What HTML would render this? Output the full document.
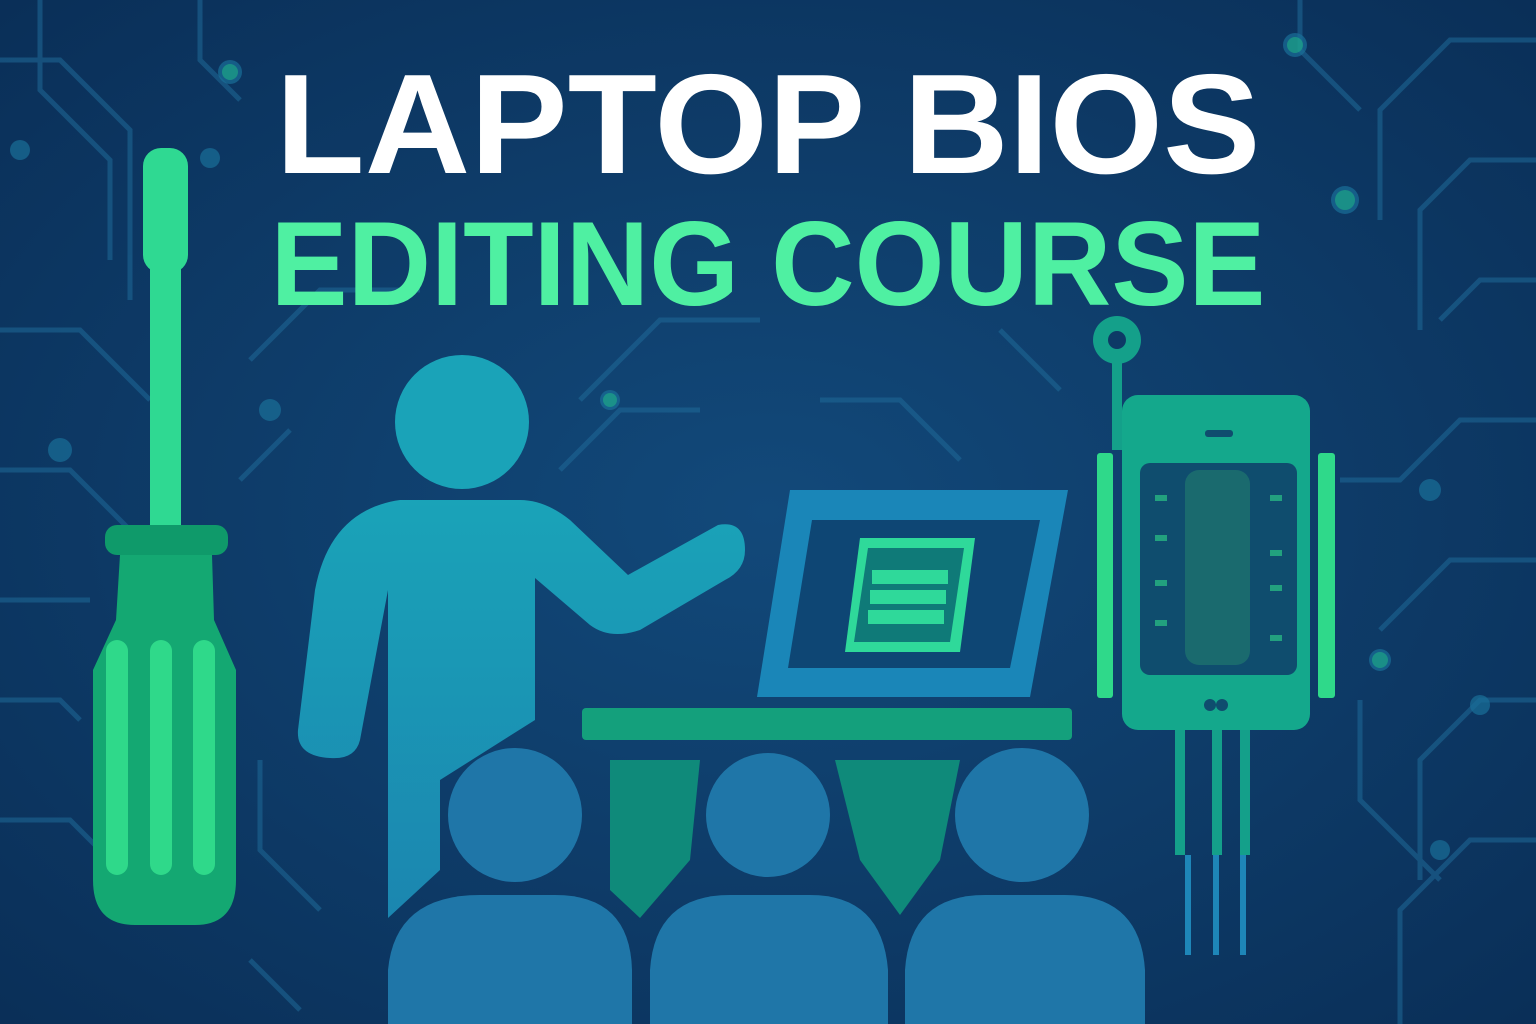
<!DOCTYPE html>
<html><head><meta charset="utf-8"><style>
html,body{margin:0;padding:0;width:1536px;height:1024px;overflow:hidden;background:#0d3a66}
svg{display:block}
</style></head><body>
<svg width="1536" height="1024" viewBox="0 0 1536 1024" xmlns="http://www.w3.org/2000/svg">
<defs>
<radialGradient id="bg" cx="50%" cy="50%" r="70%">
<stop offset="0" stop-color="#12497a"/><stop offset="1" stop-color="#0a2f58"/>
</radialGradient>
<linearGradient id="person" x1="0" y1="0" x2="0" y2="1">
<stop offset="0" stop-color="#1aa3b8"/><stop offset="1" stop-color="#1b86b0"/>
</linearGradient>
</defs>
<rect width="1536" height="1024" fill="url(#bg)"/>
<g stroke="#1f6a98" stroke-width="5" fill="none" opacity="0.55">
<polyline points="0,60 60,60 130,130 130,300"/>
<polyline points="40,0 40,90 110,160 110,260"/>
<polyline points="200,0 200,60 240,100"/>
<polyline points="0,330 80,330 150,400"/>
<polyline points="0,470 70,470 130,530"/>
<polyline points="0,600 90,600"/>
<polyline points="0,700 60,700 80,720"/>
<polyline points="0,820 70,820 100,850"/>
<polyline points="250,360 320,290 420,290"/>
<polyline points="240,480 290,430"/>
<polyline points="260,760 260,850 320,910"/>
<polyline points="250,960 300,1010"/>
<polyline points="1536,40 1450,40 1380,110 1380,220"/>
<polyline points="1300,0 1300,50 1360,110"/>
<polyline points="1536,160 1470,160 1420,210 1420,330"/>
<polyline points="1536,280 1480,280 1440,320"/>
<polyline points="1536,420 1460,420 1400,480 1340,480"/>
<polyline points="1536,560 1450,560 1380,630"/>
<polyline points="1536,700 1480,700 1420,760 1420,880"/>
<polyline points="1536,840 1470,840 1400,910 1400,1024"/>
<polyline points="1360,700 1360,800 1440,880"/>
<polyline points="580,400 660,320 760,320"/>
<polyline points="820,400 900,400 960,460"/>
<polyline points="1000,330 1060,390"/>
<polyline points="560,470 620,410 700,410"/>
</g>
<g fill="#1a6f98" opacity="0.7">
<circle cx="230" cy="72" r="12"/><circle cx="210" cy="158" r="10"/><circle cx="1295" cy="45" r="12"/>
<circle cx="1345" cy="200" r="14"/><circle cx="1380" cy="660" r="11"/><circle cx="1480" cy="705" r="10"/>
<circle cx="610" cy="400" r="10"/><circle cx="270" cy="410" r="11"/><circle cx="20" cy="150" r="10"/>
<circle cx="60" cy="450" r="12"/><circle cx="1430" cy="490" r="11"/><circle cx="1440" cy="850" r="10"/>
</g>
<g fill="#1fbf86" opacity="0.5">
<circle cx="230" cy="72" r="8"/><circle cx="1295" cy="45" r="8"/><circle cx="1345" cy="200" r="10"/><circle cx="1380" cy="660" r="8"/><circle cx="610" cy="400" r="7"/>
</g>
<text x="768" y="173" text-anchor="middle" font-family="Liberation Sans, sans-serif" font-weight="700" font-size="142" fill="#ffffff" textLength="985" lengthAdjust="spacingAndGlyphs">LAPTOP BIOS</text>
<text x="768" y="305" text-anchor="middle" font-family="Liberation Sans, sans-serif" font-weight="700" font-size="120" fill="#4ff0a2" textLength="995" lengthAdjust="spacingAndGlyphs">EDITING COURSE</text>
<!-- screwdriver -->
<rect x="143" y="148" width="45" height="125" rx="18" fill="#2fd992"/>
<rect x="150" y="265" width="31" height="265" fill="#2fd992"/>
<rect x="105" y="525" width="123" height="30" rx="12" fill="#0f9a6a"/>
<path d="M120,555 L212,555 L214,620 L236,670 L236,880 Q236,925 195,925 L135,925 Q93,925 93,880 L93,670 L116,620 Z" fill="#14a872"/>
<rect x="106" y="640" width="22" height="235" rx="11" fill="#2fd98a"/>
<rect x="150" y="640" width="22" height="235" rx="11" fill="#2fd98a"/>
<rect x="193" y="640" width="22" height="235" rx="11" fill="#2fd98a"/>
<!-- person -->
<circle cx="462" cy="422" r="67" fill="#1aa3b8"/>
<path d="M400,500 L520,500 Q545,500 570,520 L628,575 L718,525 Q745,520 745,550 Q745,570 725,580 L640,630 Q610,640 590,625 L535,578 L535,720 L440,780 L440,870 L388,918 L388,590 L360,740 Q355,760 330,758 Q296,756 298,730 L315,590 Q330,510 400,500 Z" fill="url(#person)"/>
<!-- laptop -->
<path d="M790,490 L1068,490 L1030,697 L757,697 Z" fill="#1a86b8"/>
<path d="M812,520 L1040,520 L1010,668 L788,668 Z" fill="#0e4674"/>
<path d="M860,538 L975,538 L960,652 L845,652 Z" fill="#2fd99a"/>
<path d="M868,548 L964,548 L950,642 L854,642 Z" fill="#0f7a78"/>
<rect x="872" y="570" width="76" height="14" fill="#2fd99a"/>
<rect x="870" y="590" width="76" height="14" fill="#2fd99a"/>
<rect x="868" y="610" width="76" height="14" fill="#2fd99a"/>
<rect x="582" y="708" width="490" height="32" rx="4" fill="#14a07c"/>
<path d="M610,760 L700,760 L690,860 L640,918 L610,890 Z" fill="#0f8a7a"/>
<path d="M835,760 L960,760 L940,860 L900,915 L860,860 Z" fill="#0f8a7a"/>
<!-- audience -->
<g fill="#1f76a8">
<circle cx="515" cy="815" r="67"/><circle cx="768" cy="815" r="62"/><circle cx="1022" cy="815" r="67"/>
<path d="M388,1024 L388,970 Q395,895 480,895 L555,895 Q630,895 632,970 L632,1024 Z"/>
<path d="M650,1024 L650,970 Q655,895 730,895 L810,895 Q882,895 888,970 L888,1024 Z"/>
<path d="M905,1024 L905,970 Q910,895 985,895 L1065,895 Q1140,895 1145,970 L1145,1024 Z"/>
</g>
<!-- device -->
<circle cx="1117" cy="340" r="24" fill="#14a08a"/><circle cx="1117" cy="340" r="9" fill="#0d3a66"/>
<rect x="1112" y="360" width="10" height="90" fill="#14a08a"/>
<rect x="1097" y="453" width="16" height="245" rx="3" fill="#2fd98a"/>
<rect x="1318" y="453" width="17" height="245" rx="3" fill="#2fd98a"/>
<rect x="1175" y="725" width="10" height="130" fill="#14a08a"/>
<rect x="1212" y="725" width="10" height="130" fill="#14a08a"/>
<rect x="1240" y="725" width="10" height="130" fill="#14a08a"/>
<rect x="1185" y="855" width="6" height="100" fill="#1e86b8"/>
<rect x="1213" y="855" width="6" height="100" fill="#1e86b8"/>
<rect x="1240" y="855" width="6" height="100" fill="#1e86b8"/>
<rect x="1122" y="395" width="188" height="335" rx="16" fill="#14a88c"/>
<rect x="1140" y="463" width="157" height="212" rx="10" fill="#0f4d6e"/>
<rect x="1185" y="470" width="65" height="195" rx="14" fill="#1a6a6e"/>
<rect x="1205" y="430" width="28" height="7" rx="3" fill="#0f4d6e"/>
<circle cx="1210" cy="705" r="6" fill="#0f4d6e"/><circle cx="1222" cy="705" r="6" fill="#0f4d6e"/>
<g fill="#2fd98a" opacity="0.6">
<rect x="1155" y="495" width="12" height="6"/><rect x="1155" y="535" width="12" height="6"/><rect x="1155" y="580" width="12" height="6"/><rect x="1155" y="620" width="12" height="6"/>
<rect x="1270" y="495" width="12" height="6"/><rect x="1270" y="550" width="12" height="6"/><rect x="1270" y="585" width="12" height="6"/><rect x="1270" y="635" width="12" height="6"/>
</g>
</svg>
</body></html>
